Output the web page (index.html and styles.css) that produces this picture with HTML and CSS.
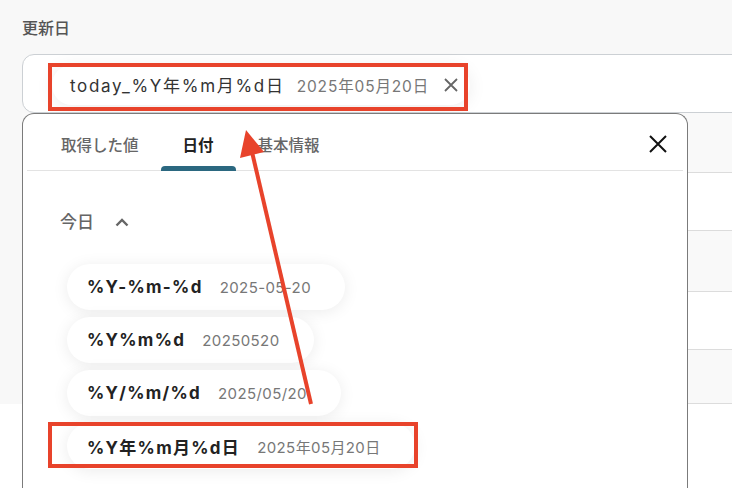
FILE: index.html
```html
<!DOCTYPE html>
<html lang="ja">
<head>
    <meta charset="UTF-8">
    <meta name="viewport" content="width=device-width, initial-scale=1.0">
    <title>更新日</title>
    <link rel="stylesheet" href="styles.css">
</head>
<body>

    <div class="page">
        <div class="field">
            <label class="field-label">更新日</label>
            <div class="field-input">
                <span class="token marked">
                    <span class="token-code">today_%Y年%m月%d日</span>
                    <span class="token-value">2025年05月20日</span>
                    <svg class="token-remove" width="16" height="16" viewBox="0 0 16 16">
                        <path d="M2 2 L14 14 M14 2 L2 14" stroke="#666" stroke-width="1.8" fill="none"/>
                    </svg>
                </span>
            </div>
        </div>

        <div class="rows">
            <div class="row row-alt" style="height: 59px"></div>
            <div class="row" style="height: 57px"></div>
            <div class="row row-alt" style="height: 60px"></div>
            <div class="row" style="height: 57px"></div>
            <div class="row row-alt" style="height: 53px"></div>
        </div>
        <div class="footer"></div>

        <!-- dropdown panel -->
        <div class="picker">
            <div class="tabs">
                <div class="tab">取得した値</div>
                <div class="tab active">日付</div>
                <div class="tab">基本情報</div>
                <button class="close">
                    <svg width="18" height="18" viewBox="0 0 18 18">
                        <path d="M1 1 L17 17 M17 1 L1 17" stroke="#111" stroke-width="2" fill="none"/>
                    </svg>
                </button>
            </div>

            <div class="section-title">
                <span>今日</span>
                <svg width="14" height="9" viewBox="0 0 14 9">
                    <path d="M1.5 7.5 L7 2 L12.5 7.5" stroke="#666" stroke-width="2.4" fill="none"/>
                </svg>
            </div>

            <div class="chips">
                <div class="chip"><span class="chip-code">%Y-%m-%d</span><span class="chip-value">2025-05-20</span></div>
                <div class="chip"><span class="chip-code">%Y%m%d</span><span class="chip-value">20250520</span></div>
                <div class="chip"><span class="chip-code">%Y/%m/%d</span><span class="chip-value">2025/05/20</span></div>
                <div class="chip marked-chip"><span class="chip-code">%Y年%m月%d日</span><span class="chip-value">2025年05月20日</span></div>
            </div>
        </div>

        <!-- annotation arrow -->
        <svg class="arrow" width="732" height="488" viewBox="0 0 732 488">
            <line x1="311" y1="404" x2="252" y2="152" stroke="#e8432b" stroke-width="4"/>
            <polygon points="246,130 240,158 264,152" fill="#e8432b"/>
        </svg>
    </div>

</body>
</html>
```

FILE: styles.css
```css
:root {
    --red: #e8432b;
    --teal: #2b6880;
    --line: #dcdcdc;
}

body {
    margin: 0;
    font-family: Inter, "Noto Sans CJK JP", sans-serif;
    background: #f8f8f8;
    overflow: hidden;
}

.page {
    position: relative;
    width: 732px;
    height: 488px;
    overflow: hidden;
}

.field {
    padding: 16px 0 0 22px;
}

.field-label {
    display: block;
    font-size: 16px;
    line-height: 24px;
    font-weight: 500;
    color: #555;
    margin-bottom: 14px;
}

.field-input {
    box-sizing: border-box;
    height: 59px;
    width: 760px;
    background: #fff;
    border: 1px solid #ccd0d4;
    border-radius: 12px 0 0 12px;
    display: flex;
    align-items: center;
    padding-left: 29px;
}

.token {
    position: relative;
    display: flex;
    align-items: center;
    gap: 12px;
    height: 40px;
    padding: 0 11px 0 18px;
    background: #fff;
    border-radius: 20px;
    box-shadow: 0 2px 18px rgba(0, 0, 0, 0.08);
    margin-top: 2px;
}

.token-code {
    font-size: 17px;
    color: #333;
    letter-spacing: 1.7px;
}

.token-value {
    font-size: 15.5px;
    color: #777;
    letter-spacing: 0.85px;
}

.token-remove {
    margin-left: 2px;
}

/* red annotation boxes */
.marked::after,
.marked-chip::after {
    content: '';
    position: absolute;
    border: 4px solid var(--red);
}

.marked::after {
    inset: -2px 2px -6px -4px;
}

.marked-chip::after {
    inset: -1px -3px 1px -19px;
}

.rows {
    margin-left: 22px;
}

.row {
    border-bottom: 1px solid var(--line);
    background: #fff;
}

.row-alt {
    background: #f9f9f9;
}

.footer {
    height: 100px;
    background: #fff;
}

.picker {
    position: absolute;
    top: 113px;
    left: 22px;
    width: 666px;
    height: 420px;
    box-sizing: border-box;
    background: #fff;
    border: 1.5px solid #7b7b7b;
    border-bottom: none;
    border-radius: 12px 12px 0 0;
}

.tabs {
    display: flex;
    align-items: stretch;
    height: 57px;
    box-sizing: border-box;
    margin: 0 4px;
    padding-left: 12px;
    border-bottom: 1px solid #e3e3e3;
}

.tab {
    position: relative;
    display: flex;
    align-items: center;
    padding: 4px 22px 0;
    font-size: 15.5px;
    font-weight: 500;
    color: #666;
}

.tab.active {
    color: #222;
    font-weight: 700;
}

.tab.active::after {
    content: '';
    position: absolute;
    left: 0;
    right: 0;
    bottom: -1px;
    height: 5px;
    background: var(--teal);
    border-radius: 4px 4px 0 0;
}

.close {
    margin-left: auto;
    margin-right: 16px;
    padding: 4px 0 0;
    border: none;
    background: none;
    display: flex;
    align-items: center;
}

.section-title {
    display: flex;
    align-items: center;
    gap: 21px;
    margin: 39px 0 0 37px;
    font-size: 17px;
    line-height: 24px;
    font-weight: 500;
    color: #666;
}

.chips {
    display: flex;
    flex-direction: column;
    align-items: flex-start;
    gap: 7px;
    margin: 30px 0 0 44px;
}

.chip {
    position: relative;
    display: flex;
    align-items: center;
    gap: 17px;
    height: 46px;
    padding: 0 34px 0 20px;
    background: #fff;
    border-radius: 23px;
    box-shadow: 0 2px 16px rgba(0, 0, 0, 0.08);
}

.chip-code {
    font-size: 17px;
    font-weight: 700;
    color: #222;
    letter-spacing: 1.3px;
}

.chip-value {
    font-size: 15px;
    color: #777;
    letter-spacing: 0.4px;
}

.arrow {
    position: absolute;
    top: 0;
    left: 0;
}
```
